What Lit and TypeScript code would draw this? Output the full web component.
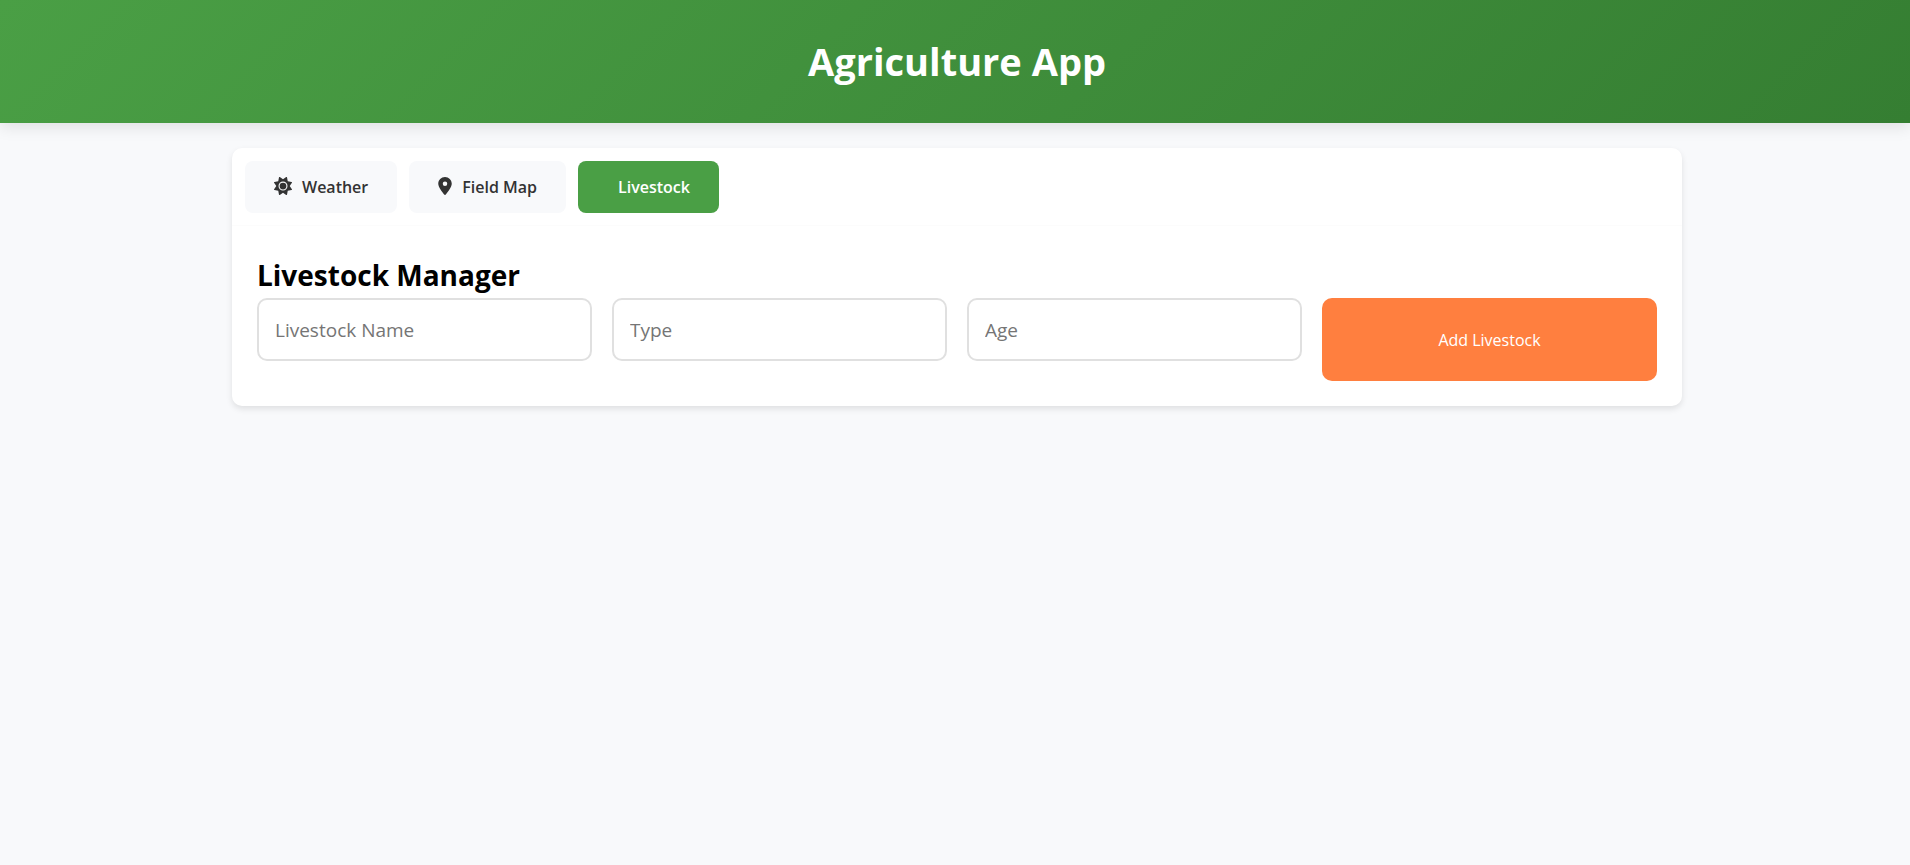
import { LitElement, html, css, svg, nothing } from "lit";
import { customElement, state } from "lit/decorators.js";

type TabId = "weather" | "map" | "livestock";

const sunIcon = html`<svg class="icon" viewBox="0 0 512 512" aria-hidden="true">
  ${svg`<path fill="currentColor" d="M361.5 1.2c5 2.1 8.6 6.6 9.6 11.9L391 121l107.900 19.800c5.300 1 9.800 4.600 11.900 9.600s1.500 10.700-1.600 15.200L446.900 256l62.300 90.300c3.100 4.500 3.700 10.200 1.600 15.200s-6.600 8.600-11.900 9.600L391 391 371.100 498.900c-1 5.300-4.600 9.800-9.600 11.900s-10.700 1.500-15.200-1.600L256 446.900l-90.300 62.300c-4.500 3.100-10.200 3.700-15.200 1.600s-8.600-6.600-9.600-11.900L121 391 13.100 371.100c-5.300-1-9.800-4.600-11.900-9.600s-1.500-10.700 1.600-15.200L65.100 256 2.800 165.700c-3.100-4.500-3.700-10.200-1.600-15.200s6.600-8.600 11.900-9.600L121 121 140.900 13.100c1-5.300 4.600-9.800 9.600-11.900s10.700-1.500 15.200 1.600L256 65.100 346.300 2.800c4.500-3.100 10.200-3.700 15.200-1.600zM160 256a96 96 0 1 1 192 0 96 96 0 1 1 -192 0zm224 0a128 128 0 1 0 -256 0 128 128 0 1 0 256 0z"/>`}
</svg>`;

const pinIcon = html`<svg class="icon pin" viewBox="0 0 384 512" aria-hidden="true">
  ${svg`<path fill="currentColor" d="M215.700 499.200C267 435 384 279.400 384 192C384 86 298 0 192 0S0 86 0 192c0 87.400 117 243 168.300 307.200c12.300 15.300 35.100 15.300 47.400 0zM192 128a64 64 0 1 1 0 128 64 64 0 1 1 0-128z"/>`}
</svg>`;

@customElement("app-root")
export class AppRoot extends LitElement {
  @state() private tab: TabId = "livestock";

  static styles = css`
    :host {
      display: block;
      min-height: 100vh;
      background: #f8f9fb;
      font-family: "Segoe UI", "Open Sans", "Noto Sans", sans-serif;
      color: #333;
    }
    * {
      box-sizing: border-box;
    }
    .header {
      padding: 32px 0 32px 4px;
      background: linear-gradient(135deg, #4a9f45, #357e32);
      box-shadow: 0 4px 15px rgba(0, 0, 0, 0.1);
      text-align: center;
    }
    .title {
      margin: 0;
      color: #fff;
      font-size: 38px;
      line-height: 59px;
      font-weight: 700;
    }
    .main {
      padding: 25px 0 25px 4px;
    }
    .card {
      max-width: 1450px;
      margin: 0 auto;
      background: #fff;
      border-radius: 10px;
      box-shadow: 0 3px 6px rgba(0, 0, 0, 0.1);
    }
    .tabs {
      display: flex;
      gap: 12px;
      padding: 13px 13px 12px;
      border-bottom: 1px solid #fcfcfc;
    }
    .tab {
      display: flex;
      align-items: center;
      gap: 10px;
      height: 52px;
      padding: 0 29px;
      border: 0;
      border-radius: 8px;
      background: #f8f9fb;
      color: #333;
      font: inherit;
      font-size: 16px;
      font-weight: 600;
      cursor: pointer;
    }
    .tab.active {
      padding-left: 40px;
      background: #4a9f45;
      color: #fff;
    }
    .icon {
      width: 18px;
      height: 18px;
      margin-bottom: 3px;
    }
    .pin {
      width: 14px;
    }
    .panel {
      padding: 32px 25px 25px;
    }
    .heading {
      margin: 0 0 6px;
      color: #000;
      font-size: 28px;
      line-height: 34px;
      font-weight: 700;
    }
    .form {
      display: grid;
      grid-template-columns: repeat(auto-fit, minmax(240px, 1fr));
      gap: 0 20px;
    }
    .field {
      width: 100%;
      height: 63px;
      margin: 0 0 20px;
      padding: 0 16px;
      border: 2px solid #e0e0e0;
      border-radius: 10px;
      background: #fff;
      color: #333;
      font: inherit;
      font-size: 19px;
    }
    .field::placeholder {
      color: #757575;
    }
    .add {
      border: 0;
      border-radius: 10px;
      background: #ff7f3f;
      color: #fff;
      font: inherit;
      font-size: 16px;
      cursor: pointer;
    }
  `;

  private renderTab(id: TabId, label: string, icon: unknown) {
    const active = this.tab === id;
    return html`<button
      class="tab ${active ? "active" : ""}"
      type="button"
      role="tab"
      aria-selected=${active}
      @click=${() => (this.tab = id)}
    >
      ${icon}<span>${label}</span>
    </button>`;
  }

  render() {
    return html`
      <header class="header"><h1 class="title">Agriculture App</h1></header>
      <main class="main">
        <section class="card">
          <div class="tabs" role="tablist">
            ${this.renderTab("weather", "Weather", sunIcon)}
            ${this.renderTab("map", "Field Map", pinIcon)}
            ${this.renderTab("livestock", "Livestock", nothing)}
          </div>
          <div class="panel" role="tabpanel">
            <h2 class="heading">Livestock Manager</h2>
            <form class="form" @submit=${(e: Event) => e.preventDefault()}>
              <input class="field" type="text" name="name" placeholder="Livestock Name" aria-label="Livestock Name" />
              <input class="field" type="text" name="type" placeholder="Type" aria-label="Type" />
              <input class="field" type="number" name="age" placeholder="Age" aria-label="Age" />
              <button class="add" type="submit">Add Livestock</button>
            </form>
          </div>
        </section>
      </main>
    `;
  }
}
